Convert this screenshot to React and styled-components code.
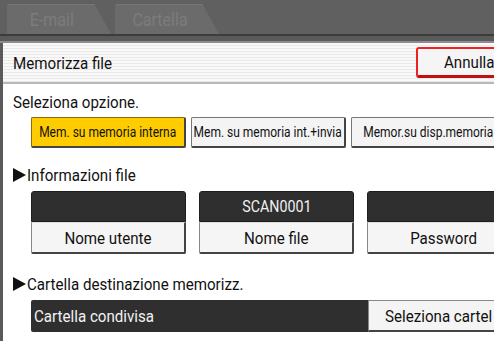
import React from 'react'
import styled, { createGlobalStyle } from 'styled-components';

const GlobalStyle = createGlobalStyle`
    html, body {
        margin: 0;
        padding: 0;
        background: #606060;
        overflow: hidden;
    }
    body {
        font-family: Roboto, "Liberation Sans", sans-serif;
        color: #111;
    }
`;

function App() {
    return (
        <Screen>
            <GlobalStyle />
            <TabBar>
                <Tab><Txt>E-mail</Txt></Tab>
                <Tab><Txt>Cartella</Txt></Tab>
            </TabBar>
            <Gap />
            <Panel>
                <Header>
                    <Txt $origin="left">Memorizza file</Txt>
                    <CancelButton><Txt $origin="left">Annulla</Txt></CancelButton>
                </Header>
                <Body>
                    <Label><Txt $origin="left">Seleziona opzione.</Txt></Label>
                    <OptionRow>
                        <OptionButton $active><Txt $sx={0.8}>Mem. su memoria interna</Txt></OptionButton>
                        <OptionButton><Txt $sx={0.8}>Mem. su memoria int.+invia</Txt></OptionButton>
                        <OptionButton><Txt $sx={0.8}>Memor.su disp.memoria</Txt></OptionButton>
                    </OptionRow>
                    <SectionTitle $top="18px"><Txt $origin="left">Informazioni file</Txt></SectionTitle>
                    <FieldRow>
                        <Field>
                            <FieldValue></FieldValue>
                            <FieldLabel><Txt>Nome utente</Txt></FieldLabel>
                        </Field>
                        <Field>
                            <FieldValue><Txt>SCAN0001</Txt></FieldValue>
                            <FieldLabel><Txt>Nome file</Txt></FieldLabel>
                        </Field>
                        <Field>
                            <FieldValue></FieldValue>
                            <FieldLabel><Txt>Password</Txt></FieldLabel>
                        </Field>
                    </FieldRow>
                    <SectionTitle $top="21px"><Txt $origin="left">Cartella destinazione memorizz.</Txt></SectionTitle>
                    <FolderRow>
                        <FolderValue><Txt $origin="left">Cartella condivisa</Txt></FolderValue>
                        <FolderButton><Txt $origin="left">Seleziona cartel</Txt></FolderButton>
                    </FolderRow>
                </Body>
            </Panel>
        </Screen>
    )
}

const Screen = styled.div`
    width: 494px;
    height: 341px;
    overflow: hidden;
    background: #606060;
`;

// the panel uses a tall narrow font, so glyphs get squeezed a bit
const Txt = styled.span`
    display: inline-block;
    flex: none;
    white-space: nowrap;
    transform: scaleX(${p => p.$sx || 0.89});
    transform-origin: ${p => p.$origin || 'center'};
`;

const TabBar = styled.div`
    height: 34px;
    display: flex;
    align-items: flex-end;
    gap: 4px;
    padding-left: 7px;
    border-bottom: 2px solid #3c3c3c;
`;

const Tab = styled.div`
    width: 104px;
    height: 30px;
    box-sizing: border-box;
    padding-right: 14px;
    display: flex;
    align-items: center;
    justify-content: center;
    font-size: 18px;
    color: #7c7c7c;
    background: #6b6b6b;
    border-top: 1px solid #777;
    border-radius: 3px 0 0 0;
    clip-path: polygon(0 0, 84% 0, 100% 100%, 0 100%);
`;

const Gap = styled.div`
    height: 5px;
    background: #5a5a5a;
    border-bottom: 2px solid #8c8c8c;
`;

const Panel = styled.div`
    background: #fff;
    border-left: 3px solid #5a5a5a;
    height: 300px;
`;

const Header = styled.div`
    height: 39px;
    display: flex;
    align-items: center;
    justify-content: space-between;
    padding-left: 10px;
    font-size: 17px;
    background: repeating-linear-gradient(
        to bottom,
        #f9f9f9 0px,
        #f9f9f9 2px,
        #e9e9e9 2px,
        #e9e9e9 3px
    );
    border-bottom: 2px solid #b9b9b9;
    overflow: hidden;
`;

const CancelButton = styled.div`
    flex: none;
    width: 100px;
    height: 31px;
    box-sizing: border-box;
    margin-right: -22px;
    padding-left: 26px;
    display: flex;
    align-items: center;
    font-size: 17px;
    background: #f5f5f5;
    border: 2px solid #ee2020;
    border-bottom-width: 3px;
    border-bottom-color: #c01010;
    border-radius: 3px;
`;

const Body = styled.div`
    padding: 9px 0 0 10px;
`;

const Label = styled.div`
    font-size: 17px;
    line-height: 18px;
`;

const OptionRow = styled.div`
    display: flex;
    gap: 5px;
    margin: 6px 0 0 18px;
    white-space: nowrap;
`;

const OptionButton = styled.div`
    flex: none;
    width: 155px;
    height: 31px;
    box-sizing: border-box;
    display: flex;
    align-items: center;
    justify-content: center;
    font-size: 15px;
    background: ${p => p.$active ? '#ffcc00' : '#f4f4f4'};
    border: 1px solid ${p => p.$active ? '#8a6d00' : '#777'};
    border-right-width: 2px;
    border-bottom-width: 2px;
    border-right-color: #444;
    border-bottom-color: #444;
    border-radius: 2px;
`;

const SectionTitle = styled.div`
    margin-top: ${p => p.$top || '20px'};
    font-size: 17px;
    line-height: 18px;
    display: flex;
    align-items: center;
    &::before {
        content: '';
        flex: none;
        width: 0;
        height: 0;
        border-top: 7px solid transparent;
        border-bottom: 7px solid transparent;
        border-left: 13px solid #111;
        margin-right: 1px;
    }
`;

const FieldRow = styled.div`
    display: flex;
    gap: 13px;
    margin: 7px 0 0 18px;
`;

const Field = styled.div`
    flex: none;
    width: 155px;
    display: flex;
    flex-direction: column;
`;

const FieldValue = styled.div`
    height: 31px;
    box-sizing: border-box;
    display: flex;
    align-items: center;
    justify-content: center;
    background: #2f2f2f;
    color: #f2f2f2;
    font-size: 16px;
    border: 1px solid #1e1e1e;
    border-radius: 3px 3px 0 0;
`;

const FieldLabel = styled.div`
    height: 32px;
    box-sizing: border-box;
    display: flex;
    align-items: center;
    justify-content: center;
    background: #f5f5f5;
    font-size: 17px;
    border: 1px solid #888;
    border-top: 1px solid #ddd;
    border-right: 2px solid #444;
    border-bottom: 2px solid #444;
    border-radius: 0 0 2px 2px;
`;

const FolderRow = styled.div`
    display: flex;
    margin: 7px 0 0 18px;
    white-space: nowrap;
`;

const FolderValue = styled.div`
    flex: none;
    width: 337px;
    height: 32px;
    box-sizing: border-box;
    padding-left: 3px;
    display: flex;
    align-items: center;
    background: #2f2f2f;
    color: #f2f2f2;
    font-size: 17px;
    border-radius: 2px 0 0 2px;
`;

const FolderButton = styled.div`
    flex: none;
    width: 140px;
    height: 32px;
    box-sizing: border-box;
    padding-left: 16px;
    display: flex;
    align-items: center;
    background: #f4f4f4;
    font-size: 17px;
    border: 1px solid #888;
    border-bottom: 2px solid #444;
`;

export default App;
